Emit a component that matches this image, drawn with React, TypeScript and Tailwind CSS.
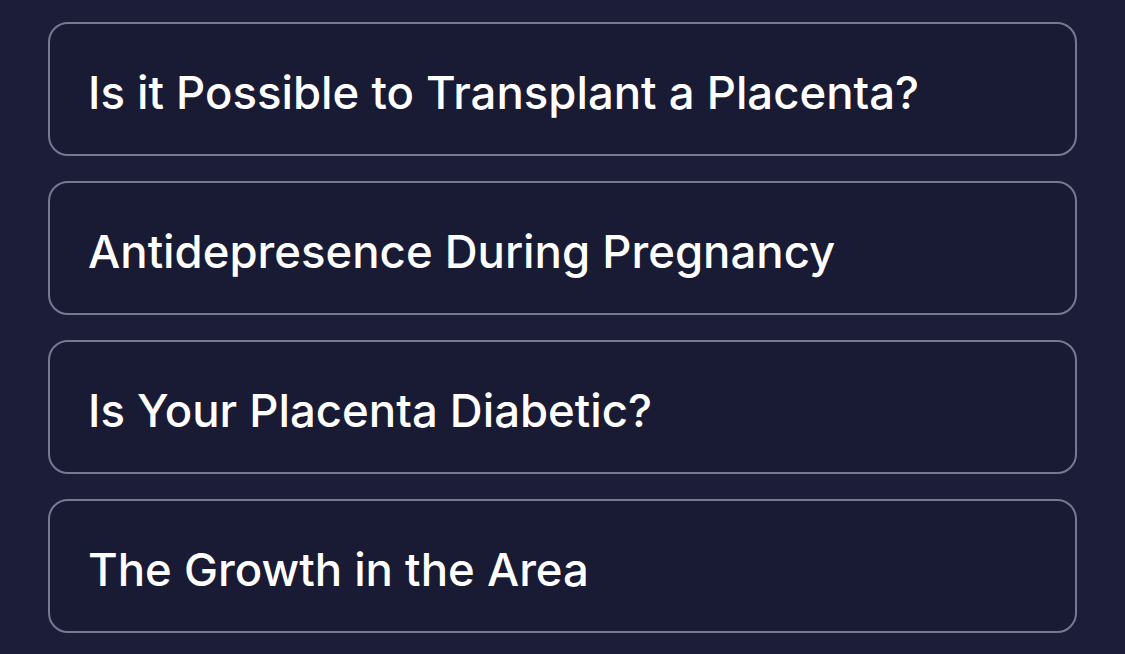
const TOPICS = [
  "Is it Possible to Transplant a Placenta?",
  "Antidepresence During Pregnancy",
  "Is Your Placenta Diabetic?",
  "The Growth in the Area",
];

export default function App() {
  return (
    <div
      className="min-h-[654px] w-full bg-[#1c1d38] px-[48px] pt-[22px]"
      style={{ fontFamily: "Inter, 'Noto Sans', sans-serif" }}
    >
      <div className="flex flex-col gap-[25px]">
        {TOPICS.map((t) => (
          <div
            key={t}
            className="flex h-[134px] items-center rounded-[20px] border-2 border-[#777992] bg-[#191a33] pl-[38px] pt-[8px]"
          >
            <span className="text-[45.5px] font-medium text-white">{t}</span>
          </div>
        ))}
      </div>
    </div>
  );
}
